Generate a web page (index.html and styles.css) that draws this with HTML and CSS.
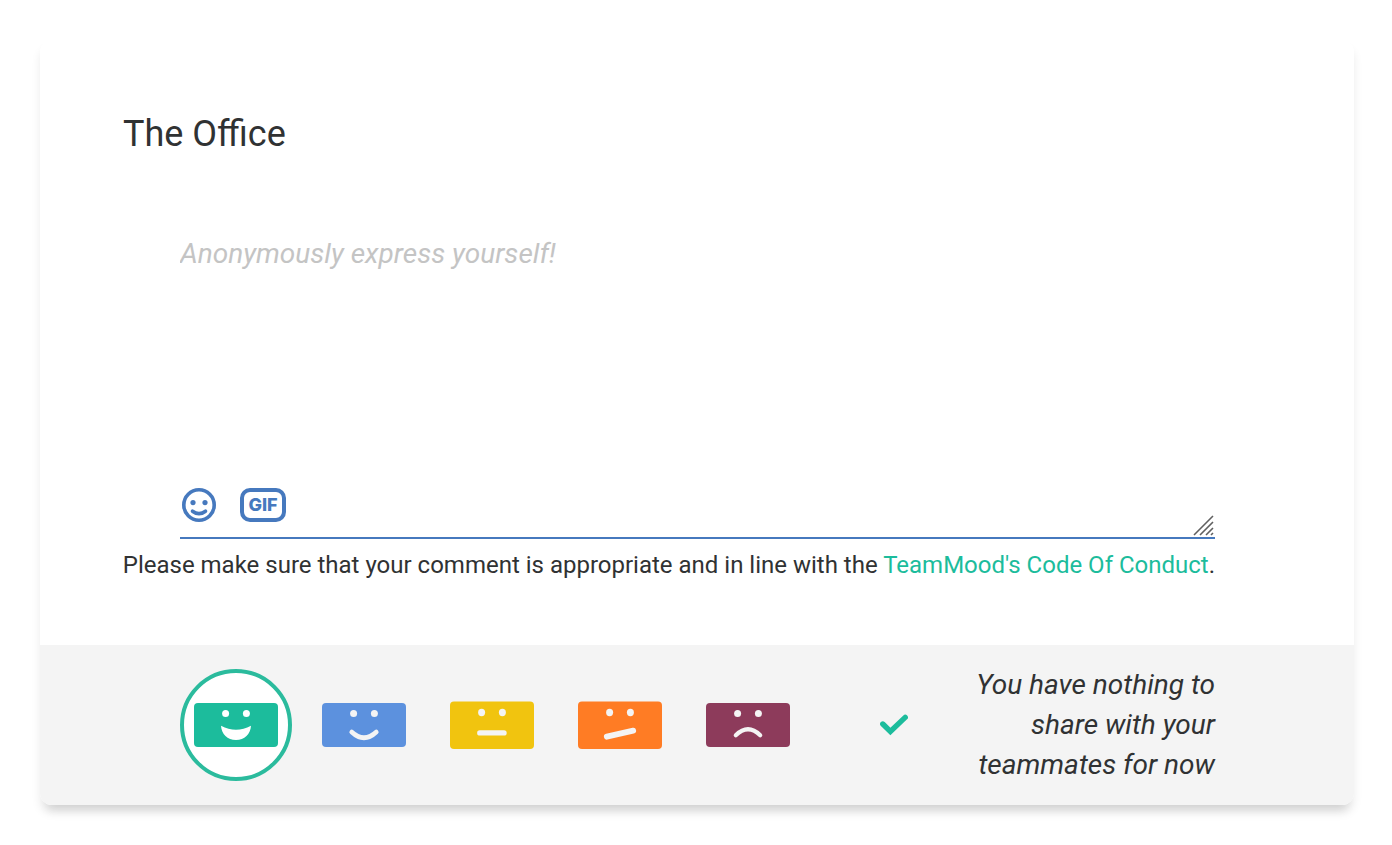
FILE: index.html
```html
<!DOCTYPE html>
<html lang="en">
<head>
<meta charset="utf-8">
<meta name="viewport" content="width=device-width, initial-scale=1">
<title>The Office</title>
<link rel="stylesheet" href="styles.css">
</head>
<body>
<form class="card">
  <div class="card-body">
    <h1 class="title">The Office</h1>
    <div class="editor">
      <textarea class="comment" aria-label="Comment" placeholder="Anonymously express yourself!"></textarea>
      <div class="tools">
        <button class="tool" type="button" aria-label="Insert emoji">
          <svg width="38" height="38" viewBox="0 0 38 38" fill="none" stroke="currentColor" stroke-width="4" stroke-linecap="round">
            <circle cx="19" cy="19" r="15.2" stroke-width="3.6"/>
            <circle cx="13" cy="16.6" r="2.6" fill="currentColor" stroke="none"/>
            <circle cx="25" cy="16.6" r="2.6" fill="currentColor" stroke="none"/>
            <path d="M12.5 25.2Q19 30.2 25.5 25.2" stroke-width="3.6"/>
          </svg>
        </button>
        <button class="tool gif" type="button">GIF</button>
      </div>
      <svg class="grip" width="22" height="22" viewBox="0 0 22 22" fill="none" stroke="#606060" stroke-width="1.6" aria-hidden="true">
        <path d="M2 20L21 1M8 20L21 7M14 20L21 13M19 20L21 18"/>
      </svg>
    </div>
    <p class="note">Please make sure that your comment is appropriate and in line with the <a class="link" href="#conduct">TeamMood's Code Of Conduct</a>.</p>
  </div>
  <div class="card-footer">
    <div class="moods" role="radiogroup" aria-label="Mood">
      <label class="mood">
        <input class="mood-input" type="radio" name="mood" aria-label="Excellent" checked>
        <svg class="face" width="84" height="48" viewBox="0 0 84 48">
          <rect y="2" width="84" height="44" rx="4" fill="#1cbc9c"/>
          <g fill="#fff"><circle cx="31.6" cy="12.4" r="3.5"/><circle cx="52.4" cy="12.4" r="3.5"/>
          <path d="M27 24.7Q42 32.7 57 24.7C56.5 33 50.5 39 42 39S27.5 33 27 24.7Z"/></g>
        </svg>
      </label>
      <label class="mood">
        <input class="mood-input" type="radio" name="mood" aria-label="Good">
        <svg class="face" width="84" height="48" viewBox="0 0 84 48">
          <rect y="2" width="84" height="44" rx="4" fill="#5c91de"/>
          <g fill="#f4f4f4"><circle cx="31.6" cy="12.4" r="3.5"/><circle cx="52.4" cy="12.4" r="3.5"/></g>
          <path d="M29.7 31Q42 42.5 54.3 31" fill="none" stroke="#f4f4f4" stroke-width="4.6" stroke-linecap="round"/>
        </svg>
      </label>
      <label class="mood">
        <input class="mood-input" type="radio" name="mood" aria-label="Average">
        <svg class="face" width="84" height="48" viewBox="0 0 84 48">
          <rect y=".5" width="84" height="47.5" rx="4" fill="#f1c40f"/>
          <g fill="#f4f4f4"><ellipse cx="31.6" cy="11.5" rx="3.5" ry="3.7"/><ellipse cx="52.4" cy="11.5" rx="3.5" ry="3.7"/></g>
          <path d="M29.8 31.9H54" stroke="#f4f4f4" stroke-width="5.4" stroke-linecap="round"/>
        </svg>
      </label>
      <label class="mood">
        <input class="mood-input" type="radio" name="mood" aria-label="Hard">
        <svg class="face" width="84" height="48" viewBox="0 0 84 48">
          <rect y=".5" width="84" height="47.5" rx="4" fill="#ff7c24"/>
          <g fill="#f4f4f4"><ellipse cx="31.6" cy="11.5" rx="3.5" ry="3.7"/><ellipse cx="52.4" cy="11.5" rx="3.5" ry="3.7"/></g>
          <path d="M28.8 35.7L55.2 29.7" stroke="#f4f4f4" stroke-width="5.8" stroke-linecap="round"/>
        </svg>
      </label>
      <label class="mood">
        <input class="mood-input" type="radio" name="mood" aria-label="Bad">
        <svg class="face" width="84" height="48" viewBox="0 0 84 48">
          <rect y="2" width="84" height="44" rx="4" fill="#8d3b5b"/>
          <g fill="#f4f4f4"><circle cx="31.6" cy="12.4" r="3.5"/><circle cx="52.4" cy="12.4" r="3.5"/></g>
          <path d="M29.8 34.2Q42 22.3 54.2 34.2" fill="none" stroke="#f4f4f4" stroke-width="4.2" stroke-linecap="round"/>
        </svg>
      </label>
    </div>
    <svg class="check" width="28" height="22" viewBox="0 0 28 22" fill="none" stroke="#1cbc9c" stroke-width="5.4" stroke-linejoin="miter" aria-hidden="true">
      <path d="M2.8 10L10.4 17.4L25.2 3.4" stroke-linecap="round"/>
    </svg>
    <p class="status">You have nothing to share with your teammates for now</p>
  </div>
</form>
</body>
</html>
```
FILE: styles.css
```css
* {
  box-sizing: border-box;
}

body {
  margin: 0;
  padding: 40px 38px 40px 40px;
  background: #fff;
  color: #303233;
  font-family: Roboto, "Liberation Sans", sans-serif;
}

.card {
  border-radius: 12px;
  background: #fff;
  box-shadow: 0 8px 10px rgba(0, 0, 0, 0.08), 0 12px 10px -8px rgba(0, 0, 0, 0.12);
}

.card-body {
  padding: 72px 139px 64px 60px;
}

.title {
  margin: 0 0 0 23px;
  font-size: 36px;
  font-weight: 400;
  line-height: 44px;
}

.editor {
  position: relative;
  margin: 74px 0 0 80px;
  border-bottom: 2px solid #4679be;
}

.comment {
  display: block;
  width: 100%;
  height: 256px;
  padding: 8px 0;
  border: 0;
  outline: 0;
  resize: none;
  background: transparent;
  color: inherit;
  font: italic 28px/32px Roboto, "Liberation Sans", sans-serif;
}

.comment::placeholder {
  color: #c4c4c4;
  opacity: 1;
}

.tools {
  display: flex;
  align-items: center;
  gap: 22px;
  height: 38px;
  margin-bottom: 13px;
}

.tool {
  display: flex;
  align-items: center;
  justify-content: center;
  padding: 0;
  border: 0;
  background: transparent;
  color: #4679be;
  cursor: pointer;
}

.gif {
  width: 46px;
  height: 34px;
  border: 4px solid #4679be;
  border-radius: 10px;
  font: 800 18px/20px Inter, sans-serif;
}

.grip {
  position: absolute;
  right: 1px;
  bottom: 0;
}

.note {
  margin: 10px 0 0;
  font-size: 24px;
  line-height: 32px;
  text-align: right;
}

.link {
  color: #1cbc9c;
  text-decoration: none;
}

.card-footer {
  display: flex;
  align-items: center;
  padding: 20px 139px 20px 140px;
  border-radius: 0 0 12px 12px;
  background: #f4f4f4;
}

.moods {
  display: flex;
  gap: 16px;
}

.mood {
  position: relative;
  display: grid;
  place-items: center;
  width: 112px;
  height: 112px;
  cursor: pointer;
}

.mood-input {
  position: absolute;
  inset: 0;
  width: 100%;
  height: 100%;
  margin: 0;
  appearance: none;
  border-radius: 50%;
}

.mood-input:checked {
  border: 4px solid #2bbb9d;
  background: #fff;
}

.face {
  position: relative;
}

.check {
  flex: none;
  margin-left: 76px;
}

.status {
  width: 256px;
  margin: 0 0 0 auto;
  font-size: 28px;
  font-style: italic;
  line-height: 40px;
  text-align: right;
}
```
